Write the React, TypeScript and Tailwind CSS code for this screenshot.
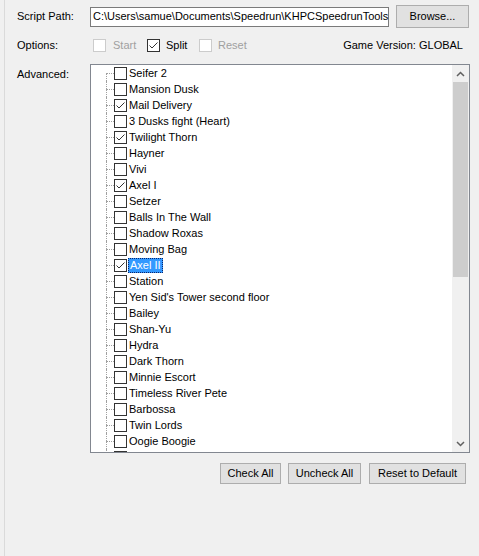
import React from "react";

const splits: [string, boolean][] = [
    ["Seifer 2", false],
    ["Mansion Dusk", false],
    ["Mail Delivery", true],
    ["3 Dusks fight (Heart)", false],
    ["Twilight Thorn", true],
    ["Hayner", false],
    ["Vivi", false],
    ["Axel I", true],
    ["Setzer", false],
    ["Balls In The Wall", false],
    ["Shadow Roxas", false],
    ["Moving Bag", false],
    ["Axel II", true],
    ["Station", false],
    ["Yen Sid's Tower second floor", false],
    ["Bailey", false],
    ["Shan-Yu", false],
    ["Hydra", false],
    ["Dark Thorn", false],
    ["Minnie Escort", false],
    ["Timeless River Pete", false],
    ["Barbossa", false],
    ["Twin Lords", false],
    ["Oogie Boogie", false],
    ["", false],
];

function Box({ checked, disabled }: { checked?: boolean; disabled?: boolean }) {
    return (
        <span className={`flex h-[13px] w-[13px] shrink-0 border bg-white ${disabled ? "border-[#cccccc]" : "border-[#333333]"}`}>
            {checked && (
                <svg width="11" height="11" viewBox="0 0 11 11">
                    <path d="M1.5 5.5 L4 8 L9.5 2.5" fill="none" stroke="#333333" strokeWidth="1" />
                </svg>
            )}
        </span>
    );
}

function Button({ label, className }: { label: string; className: string }) {
    return (
        <div className={`flex h-[21px] items-center justify-center border border-[#adadad] bg-[#e1e1e1] ${className}`}>
            {label}
        </div>
    );
}

export default function App() {
    return (
        <div className="h-[556px] w-[479px] bg-[#f0f0f0] pl-[4px] font-['Liberation_Sans',Arial,sans-serif] text-[11px] text-black">
            <div className="h-full border-l border-[#dadada] pl-[12px] pt-[5px]">

                <div className="flex h-[23px] items-center">
                    <span className="w-[73px]">Script Path:</span>
                    <div className="flex h-[20px] w-[299px] items-center border border-[#7a7a7a] bg-white px-[2px]">
                        C:\Users\samue\Documents\Speedrun\KHPCSpeedrunTools
                    </div>
                    <Button label="Browse..." className="ml-[7px] h-[23px] w-[73px]" />
                </div>

                <div className="mt-[9px] flex h-[16px] items-center pr-[16px]">
                    <span className="w-[73px]">Options:</span>
                    <div className="ml-[3px] flex w-[54px] items-center gap-[7px] text-[#a0a0a0]">
                        <Box disabled />
                        <span>Start</span>
                    </div>
                    <div className="flex w-[52px] items-center gap-[6px]">
                        <Box checked />
                        <span>Split</span>
                    </div>
                    <div className="flex items-center gap-[6px] text-[#a0a0a0]">
                        <Box disabled />
                        <span>Reset</span>
                    </div>
                    <span className="ml-auto">Game Version: GLOBAL</span>
                </div>

                <div className="mt-[11px] flex">
                    <span className="w-[73px] pt-[2px]">Advanced:</span>
                    <div className="flex h-[389px] w-[380px] border border-[#828790] bg-white">
                        <div className="flex-1 overflow-hidden">
                            {splits.map(([name, checked], i) => (
                                <div key={i} className="flex h-[16px] items-stretch pl-[15px]">
                                    <div className="flex w-[8px] flex-col">
                                        <div className={`h-[8px] ${i === 0 ? "" : "border-l border-dotted border-[#a0a0a0]"}`}></div>
                                        <div className="h-[8px] border-l border-t border-dotted border-[#a0a0a0]"></div>
                                    </div>
                                    <div className="flex items-center">
                                        <Box checked={checked} />
                                        {name === "Axel II" ? (
                                            <span className="ml-[1px] border border-dotted border-[#0a246a] bg-[#3399ff] px-[1px] leading-[13px] text-white">{name}</span>
                                        ) : (
                                            name && <span className="ml-[2px] whitespace-nowrap">{name}</span>
                                        )}
                                    </div>
                                </div>
                            ))}
                        </div>
                        <div className="flex w-[17px] flex-col bg-[#f0f0f0]">
                            <div className="flex h-[17px] items-center justify-center">
                                <svg width="9" height="6" viewBox="0 0 9 6">
                                    <path d="M1 5 L4.5 1.5 L8 5" fill="none" stroke="#606060" strokeWidth="1.5" />
                                </svg>
                            </div>
                            <div className="mx-[1px] h-[195px] bg-[#cdcdcd]"></div>
                            <div className="flex-1"></div>
                            <div className="flex h-[17px] items-center justify-center">
                                <svg width="9" height="6" viewBox="0 0 9 6">
                                    <path d="M1 1 L4.5 4.5 L8 1" fill="none" stroke="#606060" strokeWidth="1.5" />
                                </svg>
                            </div>
                        </div>
                    </div>
                </div>

                <div className="mt-[10px] flex justify-end pr-[13px]">
                    <Button label="Check All" className="w-[61px]" />
                    <Button label="Uncheck All" className="ml-[7px] w-[73px]" />
                    <Button label="Reset to Default" className="ml-[8px] w-[97px]" />
                </div>

            </div>
        </div>
    );
}
